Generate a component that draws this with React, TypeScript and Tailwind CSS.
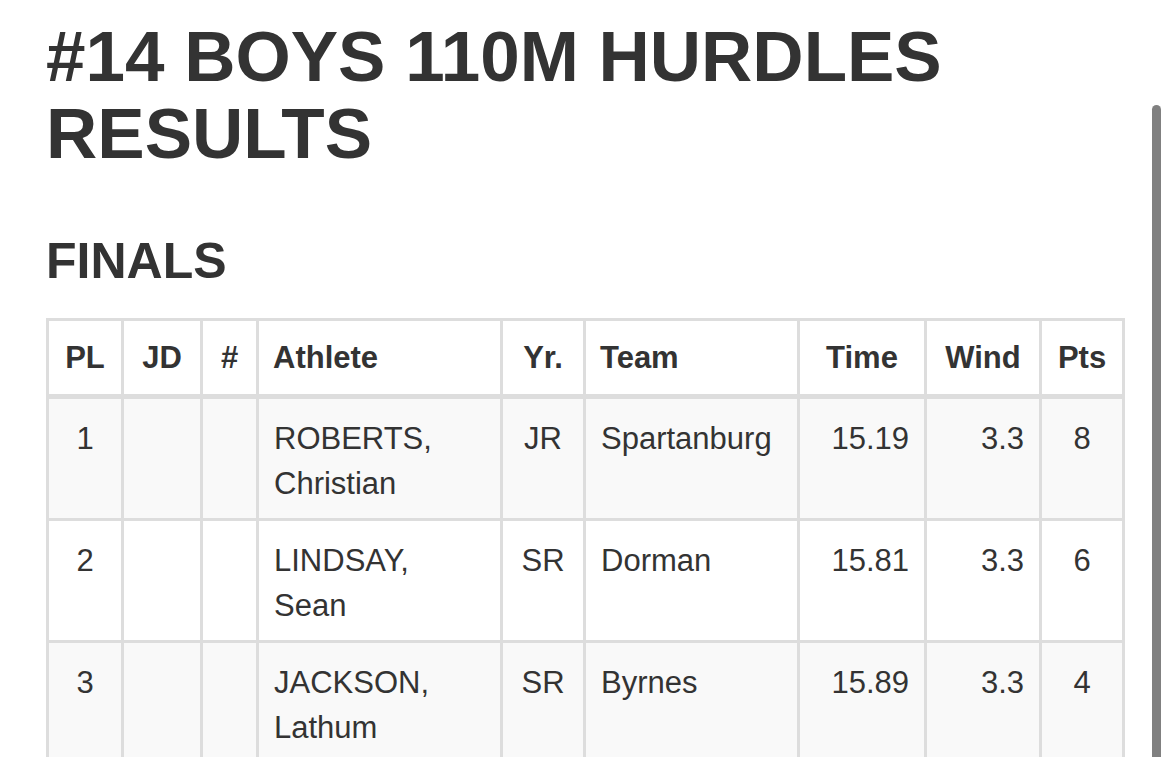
import React from "react";

const rows = [
  { pl: "1", last: "ROBERTS,", first: "Christian", yr: "JR", team: "Spartanburg", time: "15.19", wind: "3.3", pts: "8" },
  { pl: "2", last: "LINDSAY,", first: "Sean", yr: "SR", team: "Dorman", time: "15.81", wind: "3.3", pts: "6" },
  { pl: "3", last: "JACKSON,", first: "Lathum", yr: "SR", team: "Byrnes", time: "15.89", wind: "3.3", pts: "4" },
];

export default function App() {
  const th = "border-[3px] border-b-[5px] border-[#ddd] px-[14px] pt-[14px] pb-[14px] align-bottom font-bold";
  const td = "border-[3px] border-[#ddd] px-[15px] pt-[17px] pb-[12px] align-top";
  return (
    <div
      className="relative w-[1170px] h-[757px] overflow-hidden bg-white text-[#333]"
      style={{ fontFamily: '"Liberation Sans", Arial, Helvetica, sans-serif' }}
    >
      <div className="px-[46px] pt-[18px]">
        <h1 className="text-[71px] leading-[77px] font-bold">
          #14 BOYS 110M HURDLES
          <br />
          RESULTS
        </h1>
        <h3 className="mt-[62px] text-[50px] leading-[55px] font-bold">FINALS</h3>
        <table className="mt-[29px] w-[1076px] table-fixed border-collapse text-[31px] leading-[45px]">
          <colgroup>
            <col className="w-[75px]" />
            <col className="w-[79px]" />
            <col className="w-[56px]" />
            <col className="w-[244px]" />
            <col className="w-[83px]" />
            <col className="w-[214px]" />
            <col className="w-[127px]" />
            <col className="w-[115px]" />
            <col className="w-[83px]" />
          </colgroup>
          <thead>
            <tr className="bg-white">
              <th className={`${th} text-center`}>PL</th>
              <th className={`${th} text-center`}>JD</th>
              <th className={`${th} text-center`}>#</th>
              <th className={`${th} text-left`}>Athlete</th>
              <th className={`${th} text-center`}>Yr.</th>
              <th className={`${th} text-left`}>Team</th>
              <th className={`${th} text-center`}>Time</th>
              <th className={`${th} text-center`}>Wind</th>
              <th className={`${th} text-center`}>Pts</th>
            </tr>
          </thead>
          <tbody>
            {rows.map((r, i) => (
              <tr key={r.pl} className={i % 2 === 0 ? "bg-[#f9f9f9]" : "bg-white"}>
                <td className={`${td} text-center`}>{r.pl}</td>
                <td className={td}></td>
                <td className={td}></td>
                <td className={`${td} text-left`}>
                  {r.last}
                  <br />
                  {r.first}
                </td>
                <td className={`${td} text-center`}>{r.yr}</td>
                <td className={`${td} text-left`}>{r.team}</td>
                <td className={`${td} text-right`}>{r.time}</td>
                <td className={`${td} text-right`}>{r.wind}</td>
                <td className={`${td} text-center`}>{r.pts}</td>
              </tr>
            ))}
          </tbody>
        </table>
      </div>
      <div className="absolute left-[1152px] top-[105px] w-[9px] h-[700px] rounded-full bg-[#808080]" />
    </div>
  );
}
